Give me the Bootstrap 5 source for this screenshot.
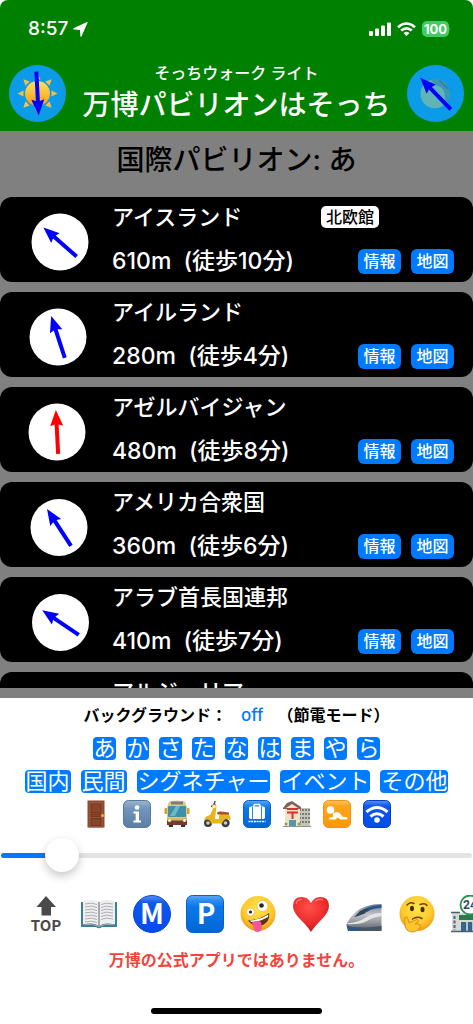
<!DOCTYPE html>
<html lang="ja">
<head>
<meta charset="utf-8">
<meta name="viewport" content="width=device-width, initial-scale=1">
<title>万博パビリオンはそっち</title>
<link href="https://cdn.jsdelivr.net/npm/bootstrap@5.3.0/dist/css/bootstrap.min.css" rel="stylesheet">
<style>
  :root { --ios-blue: #007aff; --rail: #808080; }
  body { font-family: Inter, "Noto Sans CJK JP", sans-serif; font-weight: 500; background: #fff; color: #000; font-size: 16px; line-height: 24px; }
  svg { display: block; flex: none; }
  .btn { --bs-btn-border-width: 0; --bs-btn-padding-x: 0; --bs-btn-padding-y: 0; }

  .app-head { background: #008000; color: #fff; border-radius: 8px 8px 0 0; }
  .status { height: 58px; padding: 0 22px 0 28px; }
  .status-icons { gap: 6px; }
  .clock { font-size: 19px; font-weight: 500; }
  .battery { background: #42cb66; border-radius: 5px; width: 27px; height: 16px; font-size: 13px; line-height: 16px; font-weight: 700; text-align: center; }
  .title-row { padding: 5px 9px 8px; }
  .sub-title { font-size: 16px; line-height: 20px; margin-bottom: 4px; }
  .main-title { font-size: 28px; line-height: 36px; font-weight: 500; }

  .pavilions { background: var(--rail); padding-bottom: 10px; min-height: 0; }
  .section-title { font-size: 28px; line-height: 58px; font-weight: 500; margin: 0 0 8px; }
  .scroller { gap: 10px; min-height: 0; overflow: hidden; }
  .pavilion { flex: none; background: #000; color: #fff; border-radius: 12px; padding: 7px 19px 8px 28px; gap: 20px; }
  .pavilion-text { gap: 18px; line-height: 26px; }
  .pavilion h2 { font-size: 22px; line-height: 26px; font-weight: 500; margin: 0; }
  .group-tag { background: #fff; color: #000; font-size: 16px; line-height: 22px; border-radius: 5px; padding: 0 5px; margin-right: 75px; }
  .pill { --bs-btn-font-size: 16px; --bs-btn-line-height: 25px; --bs-btn-font-weight: 500; --bs-btn-border-radius: 6px; --bs-btn-bg: var(--ios-blue); --bs-btn-color: #fff; width: 43px; }
  .pill-pair { gap: 10px; }
  .walk { white-space: pre; font-size: 23px; }

  .panel { padding: 5px 0 10px; }
  .mode-line { font-weight: 600; gap: 14px; margin-bottom: 10px; }
  .mode-line .btn { --bs-btn-color: var(--ios-blue); --bs-btn-font-size: 17px; --bs-btn-line-height: 24px; --bs-btn-font-weight: 500; }
  .chip { --bs-btn-font-size: 22px; --bs-btn-line-height: 23px; --bs-btn-font-weight: 400; --bs-btn-border-radius: 4px; --bs-btn-bg: var(--ios-blue); --bs-btn-color: #fff; --bs-btn-padding-x: 1px; white-space: nowrap; }
  .kana .chip { --bs-btn-padding-x: 0; width: 23px; }
  .chips { gap: 10px; margin-bottom: 10px; }
  .groups { margin-bottom: 7px; }
  .places { gap: 12px; margin-bottom: 10px; }
  .distance { padding: 0 1px; margin-bottom: 23px; }
  .distance .form-range { height: 34px; display: block; }
  .distance .form-range::-webkit-slider-runnable-track { height: 5px; border-radius: 3px; background: linear-gradient(to right, var(--ios-blue) 12%, #e4e4e5 12%); }
  .distance .form-range::-webkit-slider-thumb { width: 34px; height: 34px; margin-top: -15px; background: #fff; border-radius: 50%; box-shadow: 0 4px 10px rgba(0,0,0,.22); }
  .tools { gap: 15px; padding-left: 27px; overflow: hidden; margin-bottom: 15px; }
  .tools .btn, .places .btn { flex: none; }
  .notice { color: #f5433b; font-weight: 600; margin-bottom: 36px; }
  .home-bar { width: 36%; height: 6px; border-radius: 3px; background: #000; }
</style>
</head>
<body>

<svg width="0" height="0" class="position-absolute" aria-hidden="true">
  <defs>
    <symbol id="needle" viewBox="-32 -32 64 64" overflow="visible">
      <path d="M0-22 6.500-6 2-7.500V22H-2V-7.500L-6.500-6z"/>
    </symbol>
    <linearGradient id="blueTile" x1="0" y1="0" x2="0" y2="1"><stop offset="0" stop-color="#5cabf5"/><stop offset=".14" stop-color="#2a8cf0"/><stop offset=".3" stop-color="#0a78ea"/><stop offset="1" stop-color="#0465d4"/></linearGradient>
    <linearGradient id="deepTile" x1="0" y1="0" x2="0" y2="1"><stop offset="0" stop-color="#5a93f2"/><stop offset=".2" stop-color="#0e58ee"/><stop offset="1" stop-color="#064be6"/></linearGradient>
    <linearGradient id="greyTile" x1="0" y1="0" x2="0" y2="1"><stop offset="0" stop-color="#9db6cd"/><stop offset=".3" stop-color="#7296ba"/><stop offset="1" stop-color="#5a7ea5"/></linearGradient>
    <linearGradient id="orangeTile" x1="0" y1="0" x2="0" y2="1"><stop offset="0" stop-color="#ffc766"/><stop offset=".2" stop-color="#fda51e"/><stop offset="1" stop-color="#fb9803"/></linearGradient>
    <radialGradient id="face" cx=".5" cy=".35" r=".65"><stop offset="0" stop-color="#ffe64a"/><stop offset=".65" stop-color="#fdc92e"/><stop offset="1" stop-color="#ee9a17"/></radialGradient>
    <radialGradient id="heart" cx=".45" cy=".3" r=".75"><stop offset="0" stop-color="#ff5048"/><stop offset=".6" stop-color="#ec2b2b"/><stop offset="1" stop-color="#b8141a"/></radialGradient>
    <linearGradient id="sun" x1="0" y1="0" x2="0" y2="1"><stop offset="0" stop-color="#ffe25c"/><stop offset="1" stop-color="#f59b18"/></linearGradient>
    <linearGradient id="train" x1="0" y1="0" x2="0" y2="1"><stop offset="0" stop-color="#6f7f92"/><stop offset=".4" stop-color="#c0c3c8"/><stop offset=".7" stop-color="#96999e"/><stop offset="1" stop-color="#5a6068"/></linearGradient>
  </defs>
</svg>

<div class="d-flex flex-column vh-100">

  <header class="app-head">
    <div class="status d-flex align-items-center">
      <span class="clock">8:57</span>
      <svg class="ms-1" width="17" height="17" viewBox="0 0 17 17" fill="#fff" aria-hidden="true"><path d="M15.600 1.600Q16 .7 15 1.100L1.500 7.200Q.8 8 1.700 8.500L8 8.900 8.400 15.200Q9 16.200 9.600 15.200z"/></svg>
      <div class="status-icons ms-auto d-flex align-items-center">
        <svg width="22" height="15" viewBox="0 0 22 15" fill="#fff" aria-hidden="true"><rect y="9" width="4" height="5" rx="1"/><rect x="6" y="6.500" width="4" height="7.500" rx="1"/><rect x="12" y="3.500" width="4" height="10.500" rx="1"/><rect x="18" y=".5" width="4" height="13.500" rx="1"/></svg>
        <svg width="19" height="15" viewBox="0 0 19 15" aria-hidden="true"><g fill="none" stroke="#fff" stroke-width="2.600"><path d="M1 5.200Q9.500-2.200 18 5.200"/><path d="M4.200 8.600Q9.500 4 14.800 8.600"/></g><path d="M9.500 14 6.600 11Q9.500 8.500 12.400 11z" fill="#fff"/></svg>
        <div class="d-flex align-items-center"><span class="battery">100</span><svg width="2" height="6" viewBox="0 0 2 6" aria-hidden="true"><path d="M.5.500Q2 3 .5 5.500z" fill="#42cb66"/></svg></div>
      </div>
    </div>
    <div class="title-row d-flex align-items-center justify-content-between">
      <svg width="57" height="57" viewBox="-28.500 -28.500 57 57" role="img" aria-label="太陽の方向">
        <circle r="28.500" fill="#0b9be8"/>
        <g fill="#f3c04a"><path d="M-3-14 0-20 3-14z"/><path d="M-3-14 0-20 3-14z" transform="rotate(45)"/><path d="M-3-14 0-20 3-14z" transform="rotate(90)"/><path d="M-3-14 0-20 3-14z" transform="rotate(135)"/><path d="M-3-14 0-20 3-14z" transform="rotate(180)"/><path d="M-3-14 0-20 3-14z" transform="rotate(225)"/><path d="M-3-14 0-20 3-14z" transform="rotate(270)"/><path d="M-3-14 0-20 3-14z" transform="rotate(315)"/></g>
        <circle r="12.500" fill="url(#sun)"/>
        <use href="#needle" x="-32" y="-32" width="64" height="64" fill="#00f" transform="rotate(177)"/>
      </svg>
      <div class="text-center">
        <div class="sub-title">そっちウォーク ライト</div>
        <h1 class="main-title mb-0">万博パビリオンはそっち</h1>
      </div>
      <svg width="57" height="57" viewBox="-28.500 -28.500 57 57" role="img" aria-label="月の方向">
        <circle r="28.500" fill="#0b9be8"/>
        <circle r="14.500" fill="#3a97b6"/>
        <path d="M-5-13.500A14.500 14.500 0 1 0 8 12Q12 0 6-6Q0-8-5-13.500z" fill="#5fb4b8"/>
        <path d="M4-13Q8-8 13-5" stroke="#256f9e" stroke-width="2" fill="none" opacity=".5"/>
        <use href="#needle" x="-32" y="-32" width="64" height="64" fill="#00f" transform="rotate(-44)"/>
      </svg>
    </div>
  </header>

  <main class="pavilions flex-grow-1 d-flex flex-column">
    <h2 class="section-title text-center">国際パビリオン: あ</h2>
    <div class="scroller flex-grow-1 d-flex flex-column">

      <article class="pavilion d-flex align-items-center">
        <svg width="64" height="64" viewBox="28 0 64 64" aria-hidden="true"><g transform="translate(60 35)"><circle r="28.500" fill="#fff"/><use href="#needle" x="-32" y="-32" width="64" height="64" fill="#00f" transform="rotate(-49)"/></g></svg>
        <div class="pavilion-text flex-grow-1 d-flex flex-column">
          <div class="d-flex align-items-center justify-content-between"><h2>アイスランド</h2><span class="group-tag">北欧館</span></div>
          <div class="d-flex align-items-center justify-content-between"><span class="walk">610m  (徒歩10分)</span><span class="pill-pair d-flex"><button class="btn pill" type="button">情報</button><button class="btn pill" type="button">地図</button></span></div>
        </div>
      </article>

      <article class="pavilion d-flex align-items-center">
        <svg width="64" height="64" viewBox="28 0 64 64" aria-hidden="true"><g transform="translate(58 35)"><circle r="28.500" fill="#fff"/><use href="#needle" x="-32" y="-32" width="64" height="64" fill="#00f" transform="rotate(-18)"/></g></svg>
        <div class="pavilion-text flex-grow-1 d-flex flex-column">
          <h2>アイルランド</h2>
          <div class="d-flex align-items-center justify-content-between"><span class="walk">280m  (徒歩4分)</span><span class="pill-pair d-flex"><button class="btn pill" type="button">情報</button><button class="btn pill" type="button">地図</button></span></div>
        </div>
      </article>

      <article class="pavilion d-flex align-items-center">
        <svg width="64" height="64" viewBox="28 0 64 64" aria-hidden="true"><g transform="translate(57 35)"><circle r="28.500" fill="#fff"/><use href="#needle" x="-32" y="-32" width="64" height="64" fill="#f00" transform="rotate(-3)"/></g></svg>
        <div class="pavilion-text flex-grow-1 d-flex flex-column">
          <h2>アゼルバイジャン</h2>
          <div class="d-flex align-items-center justify-content-between"><span class="walk">480m  (徒歩8分)</span><span class="pill-pair d-flex"><button class="btn pill" type="button">情報</button><button class="btn pill" type="button">地図</button></span></div>
        </div>
      </article>

      <article class="pavilion d-flex align-items-center">
        <svg width="64" height="64" viewBox="28 0 64 64" aria-hidden="true"><g transform="translate(59 35.500)"><circle r="28.500" fill="#fff"/><use href="#needle" x="-32" y="-32" width="64" height="64" fill="#00f" transform="rotate(-33)"/></g></svg>
        <div class="pavilion-text flex-grow-1 d-flex flex-column">
          <h2>アメリカ合衆国</h2>
          <div class="d-flex align-items-center justify-content-between"><span class="walk">360m  (徒歩6分)</span><span class="pill-pair d-flex"><button class="btn pill" type="button">情報</button><button class="btn pill" type="button">地図</button></span></div>
        </div>
      </article>

      <article class="pavilion d-flex align-items-center">
        <svg width="64" height="64" viewBox="28 0 64 64" aria-hidden="true"><g transform="translate(60.500 35.500)"><circle r="28.500" fill="#fff"/><use href="#needle" x="-32" y="-32" width="64" height="64" fill="#00f" transform="rotate(-56)"/></g></svg>
        <div class="pavilion-text flex-grow-1 d-flex flex-column">
          <h2>アラブ首長国連邦</h2>
          <div class="d-flex align-items-center justify-content-between"><span class="walk">410m  (徒歩7分)</span><span class="pill-pair d-flex"><button class="btn pill" type="button">情報</button><button class="btn pill" type="button">地図</button></span></div>
        </div>
      </article>

      <article class="pavilion d-flex align-items-center">
        <svg width="64" height="64" aria-hidden="true"></svg>
        <div class="pavilion-text flex-grow-1 d-flex flex-column">
          <h2>アルジェリア</h2>
          <div>&nbsp;</div>
        </div>
      </article>
    </div>
  </main>

  <footer class="panel">
    <div class="mode-line d-flex justify-content-center"><span>バックグラウンド：</span><button class="btn" type="button">off</button><span>（節電モード）</span></div>

    <div class="chips kana d-flex justify-content-center">
      <button class="btn chip" type="button">あ</button><button class="btn chip" type="button">か</button><button class="btn chip" type="button">さ</button><button class="btn chip" type="button">た</button><button class="btn chip" type="button">な</button><button class="btn chip" type="button">は</button><button class="btn chip" type="button">ま</button><button class="btn chip" type="button">や</button><button class="btn chip" type="button">ら</button>
    </div>
    <div class="chips groups d-flex justify-content-center">
      <button class="btn chip" type="button">国内</button><button class="btn chip" type="button">民間</button><button class="btn chip" type="button">シグネチャー</button><button class="btn chip" type="button">イベント</button><button class="btn chip" type="button">その他</button>
    </div>

    <div class="places d-flex justify-content-center">
      <button class="btn" type="button" aria-label="ゲート"><svg width="28" height="28" viewBox="0 0 28 28"><rect x="4.500" y=".5" width="17" height="27" fill="#8a4a2e"/><rect x="6" y="2" width="14" height="25.500" fill="#99553a"/><g fill="#8a4528" stroke="#6c3420" stroke-width=".8"><rect x="8" y="4" width="10" height="8.500"/><rect x="8" y="14" width="10" height="2.500"/><rect x="8" y="18.500" width="10" height="7"/></g><circle cx="19.500" cy="15.500" r="1.500" fill="#e8b83a"/></svg></button>
      <button class="btn" type="button" aria-label="案内所"><svg width="28" height="28" viewBox="0 0 28 28"><rect x=".5" y=".5" width="27" height="27" rx="5" fill="url(#greyTile)" stroke="#55799e"/><circle cx="14" cy="7.500" r="2.300" fill="#fff"/><path d="M10.500 11.500H16V20.500H18V22.500H10.500V20.500H12.700V13.500H10.500z" fill="#fff"/></svg></button>
      <button class="btn" type="button" aria-label="バス"><svg width="28" height="28" viewBox="0 0 28 28"><path d="M5 22h5v5H6zM18 22h5l-1 5h-4z" fill="#333"/><rect x="1.500" y="8" width="3" height="6" rx="1" fill="#d69f2d"/><rect x="23.500" y="8" width="3" height="6" rx="1" fill="#d69f2d"/><path d="M6 1.500Q14-.5 22 1.500L24 7V23H4V7z" fill="#ddc98c"/><rect x="8" y="1.500" width="12" height="3" fill="#777f82"/><rect x="5" y="6" width="18" height="11" rx="1" fill="#3f8fa6"/><path d="M7 16 13 6h4l-5 10z" fill="#6fb7c6"/><rect x="4" y="18" width="20" height="2.500" fill="#d8b667"/><rect x="4" y="20.500" width="20" height="4.500" fill="#6e3e32"/><circle cx="6.500" cy="20.500" r="1.500" fill="#fff4b8"/><circle cx="21.500" cy="20.500" r="1.500" fill="#fff4b8"/></svg></button>
      <button class="btn" type="button" aria-label="モビリティ"><svg width="28" height="28" viewBox="0 0 28 28"><circle cx="5" cy="23" r="4" fill="#3d3d3d"/><circle cx="5" cy="23" r="1.800" fill="#c9c9c9"/><circle cx="22.500" cy="23" r="4.200" fill="#3d3d3d"/><circle cx="22.500" cy="23" r="1.800" fill="#c9c9c9"/><path d="M9 6.500 13.500 5 13 11 12 19H16Q15 14 19 13.500H25Q28 16 27.500 20.500Q22 16.500 19 23.500H8Q7 18 1 20Q2 16 7 15L10 9z" fill="#e6b51f"/><path d="M14 13.500Q14 11 18 11.500L26 12.500V14.500H15z" fill="#a6502c"/><path d="M8 6.500 12.500 4.500M11 5 12 1" stroke="#555" stroke-width="1.500"/><circle cx="11" cy="6.500" r="1.800" fill="#fff0a0"/></svg></button>
      <button class="btn" type="button" aria-label="手荷物"><svg width="28" height="28" viewBox="0 0 28 28"><rect x=".5" y=".5" width="27" height="27" rx="5" fill="url(#blueTile)" stroke="#075fca"/><path d="M11 7V5.500Q11 4.500 12 4.500H16Q17 4.500 17 5.500V7" fill="none" stroke="#fff" stroke-width="1.500"/><rect x="6" y="6.500" width="16" height="12.500" rx="1.800" fill="#fff"/><path d="M9.500 7V19M18.500 7V19" stroke="#2385e4" stroke-width="1"/><path d="M5.500 21.500H22.500" stroke="#fff" stroke-width="1.500" stroke-dasharray="2 .7"/></svg></button>
      <button class="btn" type="button" aria-label="郵便局"><svg width="28" height="28" viewBox="0 0 28 28"><rect x="15" y="8" width="12" height="18" fill="#c9c4b0"/><path d="M16 10H27M16 14H27M16 18H27M16 22H27" stroke="#596873" stroke-width="1.600" stroke-dasharray="2 1"/><path d="M2 8H17V26H2z" fill="#eee4ca"/><path d="M0 8 4 3 9 1 18 7V9H0z" fill="#75675a"/><path d="M3 8 9 4 15 8z" fill="#eee4ca"/><path d="M4 9H15M4 12.500H15M9.500 12.500V19" stroke="#dd2e2b" stroke-width="2"/><rect x="6" y="20" width="7" height="6" fill="#5b94a6"/><path d="M0 26.500H28" stroke="#8b9689" stroke-width="1"/><circle cx="3" cy="24" r="1.500" fill="#7f9e6a"/><circle cx="16" cy="24" r="1.500" fill="#7f9e6a"/></svg></button>
      <button class="btn" type="button" aria-label="ベビーセンター"><svg width="28" height="28" viewBox="0 0 28 28"><rect x=".5" y=".5" width="27" height="27" rx="5" fill="url(#orangeTile)" stroke="#f09412"/><circle cx="7.500" cy="10" r="3.800" fill="#fff"/><path d="M10 13.500Q14 10.500 17 13.500L20 17H24Q25.500 18.500 24 19.500H17.500L14.500 17.500 12.500 19.500H6.500Q5.500 18 7 17.300H10z" fill="#fff"/></svg></button>
      <button class="btn" type="button" aria-label="Wi-Fi"><svg width="28" height="28" viewBox="0 0 28 28"><rect x=".5" y=".5" width="27" height="27" rx="5" fill="url(#deepTile)" stroke="#073bc8"/><g fill="none" stroke="#fff" stroke-width="3"><path d="M3.500 12Q14 3 24.500 12"/><path d="M7.500 16.500Q14 11 20.500 16.500"/></g><circle cx="14" cy="20" r="2.800" fill="#fff"/></svg></button>
    </div>

    <div class="distance"><input type="range" class="form-range" min="0" max="100" value="10" aria-label="表示距離"></div>

    <nav class="tools d-flex" aria-label="ツール">
      <button class="btn" type="button" aria-label="先頭へ"><svg width="38" height="38" viewBox="0 0 38 38"><path d="M19 1 29 12H24V20.500H14.500V12H9.500z" fill="#4a4a4a"/><text x="19" y="35.500" text-anchor="middle" font-family="Noto Sans CJK JP, sans-serif" font-weight="700" font-size="15" fill="#4a4a4a">TOP</text></svg></button>
      <button class="btn" type="button" aria-label="ガイド"><svg width="38" height="38" viewBox="0 0 38 38"><path d="M1 7H37V32H22Q19 34.500 16 32H1z" fill="#3b7f98"/><path d="M3 6Q13 3 19 7Q25 3 35 6V29.500Q25 27 19 31Q13 27 3 29.500z" fill="#f0efef"/><path d="M19 7V31" stroke="#8f8f93" stroke-width="1.500"/><path d="M5 29.700Q13 28 19 31.500Q25 28 33 29.700" stroke="#aaa" fill="none"/><g stroke="#a5a5ac" stroke-width=".9" fill="none"><path d="M5 9Q12 7 17 9.500M5 12Q12 10 17 12.500M5 15Q12 13 17 15.500M5 18Q12 16 17 18.500M5 21Q12 19 17 21.500M5 24Q12 22 17 24.500M5 27Q12 25 17 27.500M21 9.500Q26 7 33 9M21 12.500Q26 10 33 12M21 15.500Q26 13 33 15M21 18.500Q26 16 33 18M21 21.500Q26 19 33 21M21 24.500Q26 22 33 24"/></g></svg></button>
      <button class="btn" type="button" aria-label="地下鉄"><svg width="38" height="38" viewBox="0 0 38 38"><circle cx="19" cy="19" r="18.500" fill="url(#deepTile)" stroke="#0646dc"/><text x="19" y="29" text-anchor="middle" font-family="Noto Sans CJK JP, sans-serif" font-weight="700" font-size="28" fill="#fff">M</text></svg></button>
      <button class="btn" type="button" aria-label="駐車場"><svg width="38" height="38" viewBox="0 0 38 38"><rect x=".5" y=".5" width="37" height="37" rx="6" fill="url(#blueTile)" stroke="#075fca"/><text x="20" y="29" text-anchor="middle" font-family="Noto Sans CJK JP, sans-serif" font-weight="700" font-size="28" fill="#fff">P</text></svg></button>
      <button class="btn" type="button" aria-label="お楽しみ"><svg width="38" height="38" viewBox="0 0 38 38"><circle cx="19" cy="18.500" r="17.500" fill="url(#face)"/><circle cx="11.500" cy="17" r="4" fill="#fff" stroke="#d9a02a" stroke-width=".5"/><circle cx="11.500" cy="17" r="1.600" fill="#30221a"/><circle cx="23.500" cy="11" r="5.500" fill="#fff" stroke="#d9a02a" stroke-width=".5"/><circle cx="22.500" cy="10.500" r="2.300" fill="#30221a"/><path d="M9 25.500Q21 25 30 18Q31.500 26 24 30Q15 33 9 25.500z" fill="#633018"/><path d="M11 25.500Q21 25 29.500 19.500L29 22Q21 27 12 27z" fill="#fff"/><path d="M13 27.500Q18 25 22 27L23 33Q22 37 18.500 37Q15 37 14.500 33z" fill="#f5569a"/></svg></button>
      <button class="btn" type="button" aria-label="お気に入り"><svg width="38" height="38" viewBox="0 0 38 38"><path d="M19 37Q16 32 8 24Q1 17 1 11Q1 2 10 2Q16 2 19 8Q22 2 28 2Q37 2 37 11Q37 17 30 24Q22 32 19 37z" fill="url(#heart)"/><path d="M4 9Q5 4 10 4.500M23 6Q27 3 31 5" stroke="#ff9c94" stroke-width="1.500" fill="none" opacity=".6"/></svg></button>
      <button class="btn" type="button" aria-label="鉄道"><svg width="38" height="38" viewBox="0 0 38 38"><path d="M36.500 9V35H4Q0 31 2 28Q9 15 22 11Q28 9 36.500 9z" fill="url(#train)"/><path d="M36.500 10Q26 10 18 15L22 17Q28 13 36.500 13z" fill="#2f568e"/><path d="M15 16Q20 13 24 13L20 18.500Q14 21 9 22z" fill="#34465e"/><path d="M36.500 18Q27 18 20 23Q12 28 3 28L2 29Q14 30 22 26Q28 22 36.500 21z" fill="#e4e5e6"/><path d="M2 31Q12 34 36.500 31V36H3z" fill="#485563"/><path d="M2 30.500Q8 33 16 32.500L12 36H3z" fill="#315783"/></svg></button>
      <button class="btn" type="button" aria-label="ヘルプ"><svg width="38" height="38" viewBox="0 0 38 38"><circle cx="19" cy="18.500" r="17.500" fill="url(#face)"/><g fill="#4b2c13"><ellipse cx="14" cy="13.500" rx="2" ry="2.800"/><ellipse cx="24.500" cy="14.500" rx="2" ry="2.800"/></g><path d="M9 10Q12 6.500 16 8.500M22 9.500Q27 7.500 29 10.500M14.500 24Q19 21 24 23.500" stroke="#6b3c12" stroke-width="1.500" fill="none" stroke-linecap="round"/><path d="M7 22Q9 21 10 24L11 28 19 24.500Q21.500 25 20 27L17 29H21Q24 31 20 35Q14 39 9 35Q6 32 7 22z" fill="#ffc52c" stroke="#d98817" stroke-width=".9"/></svg></button>
      <button class="btn" type="button" aria-label="コンビニ"><svg width="38" height="38" viewBox="0 0 38 38"><path d="M1 18H37V37H1z" fill="#d5dccf"/><path d="M1 18H7V37H1z" fill="#d5d9d6"/><path d="M3.500 21V35" stroke="#56636d" stroke-width="2" stroke-dasharray="3 1.500"/><path d="M8 20H37V25H8z" fill="#2d7a4e"/><path d="M10 27H37V36H10z" fill="#35658d"/><path d="M16 27V36M22 27V36" stroke="#dbe4e6" stroke-width="1.500"/><path d="M0 17.500H9M0 36.500H38" stroke="#4a6070" stroke-width="1.500"/><circle cx="19" cy="10" r="9.500" fill="#fff" stroke="#2c9254" stroke-width="1.800"/><text x="19" y="14" text-anchor="middle" font-family="Roboto, sans-serif" font-weight="700" font-size="12" fill="#2c4965">24</text></svg></button>
    </nav>

    <div class="notice text-center">万博の公式アプリではありません。</div>
    <div class="home-bar mx-auto"></div>
  </footer>
</div>

<script src="https://cdn.jsdelivr.net/npm/bootstrap@5.3.0/dist/js/bootstrap.bundle.min.js"></script>
</body>
</html>
